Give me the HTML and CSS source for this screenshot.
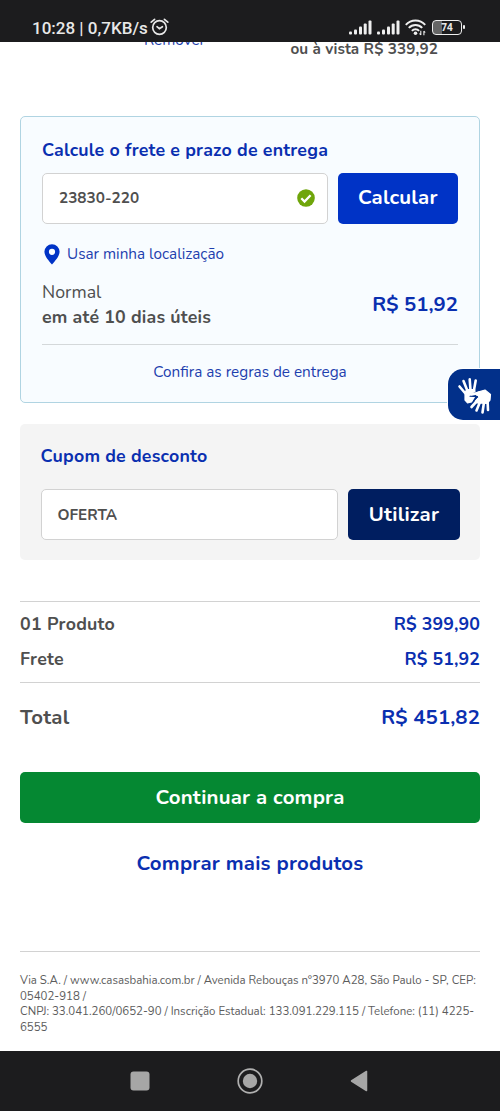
FILE: index.html
```html
<!DOCTYPE html>
<html lang="pt-BR">
<head>
<meta charset="utf-8">
<title>Carrinho</title>
<link rel="stylesheet" href="styles.css">
</head>
<body>
<div class="phone">
  <header class="status">
    <div class="status-left">
      <span class="clock">10:28 | 0,7KB/s</span>
      <svg class="alarm" width="19" height="18" viewBox="0 0 19 18" fill="none" stroke="#e8e8e8" stroke-width="1.7" stroke-linecap="round"><circle cx="9.5" cy="9.5" r="6.8"/><path d="M1.2 4.200 4.600 1.300M17.800 4.200 14.400 1.300"/><path d="M7 8.700l2.400 2 3-2"/></svg>
    </div>
    <div class="status-right">
      <svg width="23" height="15" viewBox="0 0 23 15" fill="#efefef"><rect x="0" y="11.5" width="3" height="3" rx="1"/><rect x="5" y="9.5" width="3" height="5" rx="1"/><rect x="10" y="6.5" width="3" height="8" rx="1"/><rect x="14.7" y="3.5" width="3" height="11" rx="1"/><rect x="19.5" y="0.5" width="3" height="14" rx="1"/></svg>
      <svg width="23" height="15" viewBox="0 0 23 15" fill="#efefef"><rect x="0" y="11.5" width="3" height="3" rx="1"/><rect x="5" y="9.5" width="3" height="5" rx="1"/><rect x="10" y="6.5" width="3" height="8" rx="1"/><rect x="14.7" y="3.5" width="3" height="11" rx="1"/><rect x="19.5" y="0.5" width="3" height="14" rx="1"/></svg>
      <svg class="wifi" width="21" height="17" viewBox="0 0 21 17" fill="none" stroke="#efefef" stroke-width="2"><path d="M.8 5.800C6-.1 15-.1 20.200 5.800M3.800 8.900c3.700-4 9.700-4 13.400 0M6.900 11.900c2-2.200 5.200-2.200 7.200 0"/><circle cx="10.500" cy="14.200" r="1.800" fill="#efefef" stroke="none"/><path d="M15.800 16v-4.200M14.500 14.500l1.300 1.500M18.900 12v4.200M18.900 12l1.300 1.500" stroke-width="1.100"/></svg>
      <div class="battery"><span>74</span></div>
    </div>
  </header>

  <main class="page">
    <div class="item">
      <a class="remove">Remover</a>
      <span class="cash">ou à vista R$ 339,92</span>
    </div>

    <section class="card shipping">
      <h2 class="title">Calcule o frete e prazo de entrega</h2>
      <div class="form">
        <div class="field"><span>23830-220</span>
          <svg width="18" height="18" viewBox="0 0 18 18"><circle cx="9" cy="9" r="8.800" fill="#6fa50a"/><path d="M4.300 9.300 7.500 12.500 13.600 6.300" fill="none" stroke="#fff" stroke-width="2.300"/></svg>
        </div>
        <button class="btn blue">Calcular</button>
      </div>
      <a class="locate">
        <svg width="16" height="21" viewBox="0 0 16 21"><path fill="#0033c6" fill-rule="evenodd" d="M8 .2A7.600 7.600 0 0 0 .400 7.800C.400 12.500 6.200 18.300 8 20.500 9.800 18.300 15.600 12.500 15.600 7.800A7.600 7.600 0 0 0 8 .2ZM8 4.700a3.100 3.100 0 1 1 0 6.200 3.100 3.100 0 0 1 0-6.200Z"/></svg>
        <span>Usar minha localização</span>
      </a>
      <div class="option">
        <div><div>Normal</div><div class="days">em até 10 dias úteis</div></div>
        <strong class="price">R$ 51,92</strong>
      </div>
      <a class="rules">Confira as regras de entrega</a>
    </section>

    <section class="card coupon">
      <h2 class="title">Cupom de desconto</h2>
      <div class="form">
        <div class="field"><span>OFERTA</span></div>
        <button class="btn navy">Utilizar</button>
      </div>
    </section>

    <section class="summary">
      <div class="row"><span>01 Produto</span><strong>R$ 399,90</strong></div>
      <div class="row"><span>Frete</span><strong>R$ 51,92</strong></div>
    </section>
    <div class="total"><span>Total</span><strong>R$ 451,82</strong></div>

    <button class="btn green">Continuar a compra</button>
    <a class="more">Comprar mais produtos</a>

    <footer class="legal">
      <div>Via S.A. / www.casasbahia.com.br / Avenida Rebouças n°3970 A28, São Paulo - SP, CEP:</div>
      <div>05402-918 /</div>
      <div>CNPJ: 33.041.260/0652-90 / Inscrição Estadual: 133.091.229.115 / Telefone: (11) 4225-</div>
      <div>6555</div>
    </footer>
  </main>

  <div class="libras">
    <svg width="36" height="38" viewBox="0 0 36 38" fill="none" stroke="#fff" stroke-linecap="round" stroke-linejoin="round">
      <path d="M2.500 9.500 8 16M6.500 4 10.500 14M12.700 2.300 13.500 13M18.700 3.500 17 13" stroke-width="2.600"/>
      <path d="M8 15 10 12.500l7.500 0 .5 2-5.500 2.500 0 2 5 1-3 5-4 .8L8 23Z" fill="#fff" stroke-width="1.200"/>
      <path d="M20 24 14.500 30M23 25 19.500 33.500M27 25 25.500 35.500M30.500 23 31 33" stroke-width="2.600"/>
      <path d="M14 17.600 23 15.500" stroke-width="2.800"/>
      <path d="M21 15 28 13 33.500 17.500 33 23 30 26.500 20 26 18 24 22 20 19 17.500Z" fill="#fff" stroke-width="1.200"/>
      <path d="M13 19.300 20.500 19.600 16.500 24.500" stroke="#02308a" stroke-width="1.100"/>
    </svg>
  </div>

  <nav class="nav">
    <svg width="20" height="20" viewBox="0 0 20 20"><rect x=".5" y=".5" width="19" height="19" rx="3" fill="#a6a6a6"/></svg>
    <svg width="26" height="26" viewBox="0 0 26 26"><circle cx="13" cy="13" r="11.800" fill="none" stroke="#b0b0b0" stroke-width="1.700"/><circle cx="13" cy="13" r="7.200" fill="#a6a6a6"/></svg>
    <svg width="18" height="22" viewBox="0 0 18 22"><path d="M1.500 11 16.500 1.500v19Z" fill="#a6a6a6" stroke="#a6a6a6" stroke-width="1.500" stroke-linejoin="round"/></svg>
  </nav>
</div>
</body>
</html>
```
FILE: styles.css
```css
* { box-sizing: border-box; }
body { margin: 0; background: #fff; font-family: Nunito, Lato, "Open Sans", sans-serif; color: #4f4f4f; }
span, strong { white-space: nowrap; }
strong { font-weight: 700; }
.phone { position: relative; display: flex; flex-direction: column; width: 500px; height: 1111px; overflow: hidden; }

.status { flex: none; height: 42px; padding: 14px 38px 0 32px; display: flex; justify-content: space-between; background: #1c1c1e; color: #e8e8e8; font-family: Roboto, sans-serif; z-index: 1; }
.status-left { display: flex; gap: 3px; }
.clock { font-size: 17px; line-height: 28px; font-weight: 500; }
.alarm { margin: 4px 0 0 -1px; }
.status-right { display: flex; gap: 5px; padding-top: 6px; }
.wifi { margin: -1px 1px 0 0; }
.battery { width: 30px; height: 15px; border: 1.500px solid #efefef; border-radius: 4px; font: bold 10px/12px "Open Sans", sans-serif; text-align: center; position: relative; background: linear-gradient(90deg, #666 33%, transparent 33%); }
.battery::after { content: ""; position: absolute; right: -4px; top: 4px; width: 2px; height: 4px; background: #efefef; border-radius: 1px; }

.page { flex: 1; min-height: 0; padding: 0 20px; display: flex; flex-direction: column; }
.item { height: 74px; flex: none; display: flex; justify-content: space-between; padding: 0 42px 0 124px; }
.remove { color: #1e3fae; font-size: 15.300px; line-height: 20px; margin-top: -12px; }
.cash { font-size: 15.300px; font-weight: 700; line-height: 20px; margin-top: -3px; letter-spacing: .1px; }

.card { flex: none; border-radius: 5px; }
.shipping { height: 287px; border: 1px solid #b0d4e2; background: #f8fcff; padding: 21px 21px 0; }
.coupon { height: 136.500px; margin-top: 20.500px; background: #f4f4f4; padding: 20.500px 20px 0 20.500px; }
.title { margin: 0; font-size: 17.800px; line-height: 24px; font-weight: 700; letter-spacing: .21px; color: #0a2fb0; white-space: nowrap; }
.form { display: flex; gap: 10px; margin-top: 10.500px; }
.coupon .form { margin-top: 21px; }
.field { flex: 1; height: 51px; border: 1px solid #d2d2d2; border-radius: 5px; background: #fff; padding: 0 12px 0 16px; display: flex; align-items: center; justify-content: space-between; font-size: 15.300px; font-weight: 700; }
.btn { flex: none; height: 51px; padding: 0 0 2px; border: 0; border-radius: 5px; color: #fff; font-family: inherit; font-size: 20.400px; font-weight: 700; letter-spacing: .2px; }
.blue { width: 120.500px; background: #0033c6; }
.navy { width: 112px; background: #001e60; }
.green { background: #058832; width: 100%; }
.locate { display: flex; align-items: center; gap: 7px; height: 24px; margin: 18.500px 0 0 2px; font-size: 15.300px; color: #1e3fae; }
.option { display: flex; justify-content: space-between; align-items: center; height: 79px; padding-bottom: 1px; border-bottom: 1px solid #d4d8da; font-size: 17.800px; line-height: 24.500px; }
.days { font-weight: 700; letter-spacing: .18px; }
.price { color: #0a2fb0; font-size: 20.400px; }
.rules { display: block; text-align: center; margin-top: 15px; font-size: 15.300px; line-height: 24px; color: #1e3fae; }

.summary { flex: none; margin-top: 41px; height: 82px; border-top: 1px solid #d2d2d2; border-bottom: 1px solid #d2d2d2; padding-top: 4px; font-size: 17.800px; font-weight: 700; }
.row, .total { display: flex; justify-content: space-between; align-items: center; }
.row { height: 35px; }
.row span { letter-spacing: .25px; }
.row strong, .total strong { color: #0a2fb0; letter-spacing: .08px; }
.total { height: 68px; flex: none; font-size: 20.400px; font-weight: 700; margin-bottom: 21px; }
.total span { letter-spacing: .25px; }
.more { display: block; text-align: center; margin-top: 25px; height: 102.500px; color: #0a2fb0; font-size: 20.400px; line-height: 30px; font-weight: 700; letter-spacing: .21px; }
.legal { border-top: 1px solid #d2d2d2; padding-top: 21.500px; font-size: 11.460px; line-height: 15.700px; white-space: nowrap; color: #5c5c5c; }

.libras { position: absolute; right: 0; top: 369px; width: 52px; height: 51px; padding: 8px 0 0 9px; background: #02308a; border-radius: 15px 0 0 15px; box-shadow: 0 0 0 1px #fff; }
.nav { flex: none; height: 60px; background: #1c1c1e; display: flex; align-items: center; justify-content: space-between; padding: 0 132px 0 130px; }
```
